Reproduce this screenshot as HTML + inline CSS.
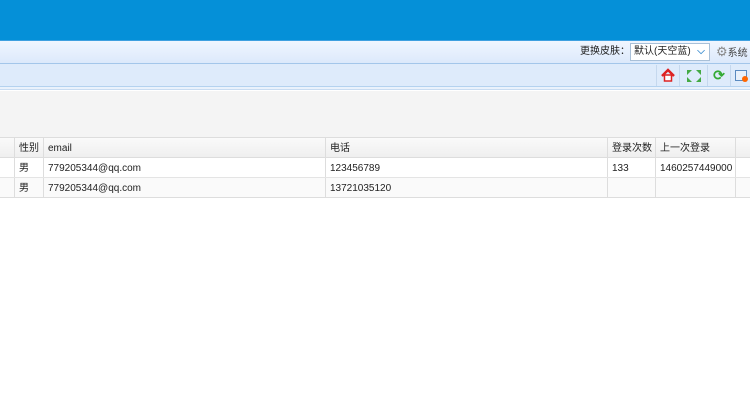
<html><head><style>
body{margin:0;width:750px;height:414px;overflow:hidden;background:#fff;font-family:"Liberation Sans","Noto Sans CJK SC",sans-serif;font-size:10px;color:#222;position:relative}
div{position:absolute;box-sizing:border-box}
.c{top:0;height:100%;border-left:1px solid #ddd;padding-left:4px;line-height:22px}
</style></head><body>
<div style="left:0;top:0;width:750px;height:40px;background:#0590d8"></div>
<div style="left:0;top:40px;width:750px;height:24px;background:linear-gradient(#f0f6ff,#dce9fb);border-top:1px solid #3fa0e0;border-bottom:1px solid #a3c6ea"></div>
<div style="left:580px;top:45px;line-height:14px;font-size:10px">更换皮肤：</div>
<div style="left:630px;top:43px;width:80px;height:18px;border:1px solid #a9c0d8;background:#fff;font-size:10px;line-height:16px;padding-left:3px">默认(天空蓝)<span style="position:absolute;right:0;top:0;width:16px;height:16px;color:#3d8fd0;text-align:center;font-weight:bold">⌵</span></div>
<div style="left:716px;top:45px;line-height:14px;font-size:10px;color:#444"><span style="color:#888;font-size:13px">⚙</span>系统</div>
<div style="left:0;top:64px;width:750px;height:23px;background:#deebfb;border-bottom:1px solid #b4d2ef"></div>
<div style="left:0;top:87px;width:750px;height:3px;background:#eaf2fc;border-bottom:1px solid #c8dcf2"></div>
<div style="left:656px;top:65px;width:24px;height:21px;border-left:1px solid #c5d8ee;border-right:1px solid #c5d8ee"><svg width="22" height="21"><path d="M5 11 L11 5 L17 11" stroke="#d22" stroke-width="2.5" fill="none"/><rect x="7.5" y="10" width="7" height="6" fill="#fff" stroke="#d22" stroke-width="1.5"/></svg></div>
<div style="left:683px;top:65px;width:24px;height:21px"><svg width="22" height="21"><g fill="#4a4"><path d="M4 5h5l-5 5z"/><path d="M18 5h-5l5 5z"/><path d="M4 17h5l-5-5z"/><path d="M18 17h-5l5-5z"/></g></svg></div>
<div style="left:707px;top:65px;width:24px;height:21px;border-left:1px solid #c5d8ee;border-right:1px solid #c5d8ee;text-align:center;color:#3a3;font-size:14px;line-height:21px;font-weight:bold">⟳</div>
<div style="left:735px;top:70px;width:12px;height:11px;border:1px solid #5a8ac0;background:#e8f0fa"></div>
<div style="left:742px;top:76px;width:6px;height:6px;border-radius:3px;background:#f60"></div>
<div style="left:0;top:91px;width:750px;height:47px;background:#f4f4f4;border-bottom:1px solid #ddd"></div>
<div style="left:0;top:138px;width:750px;height:20px;background:linear-gradient(#fafafa,#efefef);border-bottom:1px solid #ddd">
<div class="c" style="left:14px">性别</div><div class="c" style="left:43px">email</div><div class="c" style="left:325px">电话</div><div class="c" style="left:607px">登录次数</div><div class="c" style="left:655px">上一次登录</div><div class="c" style="left:735px"></div></div>
<div style="left:0;top:158px;width:750px;height:20px;border-bottom:1px solid #e4e4e4">
<div class="c" style="left:14px">男</div><div class="c" style="left:43px">779205344@qq.com</div><div class="c" style="left:325px">123456789</div><div class="c" style="left:607px">133</div><div class="c" style="left:655px">1460257449000</div><div class="c" style="left:735px"></div></div>
<div style="left:0;top:178px;width:750px;height:20px;border-bottom:1px solid #ddd;background:#fafafa">
<div class="c" style="left:14px">男</div><div class="c" style="left:43px">779205344@qq.com</div><div class="c" style="left:325px">13721035120</div><div class="c" style="left:607px"></div><div class="c" style="left:655px"></div><div class="c" style="left:735px"></div></div>
</body></html>
